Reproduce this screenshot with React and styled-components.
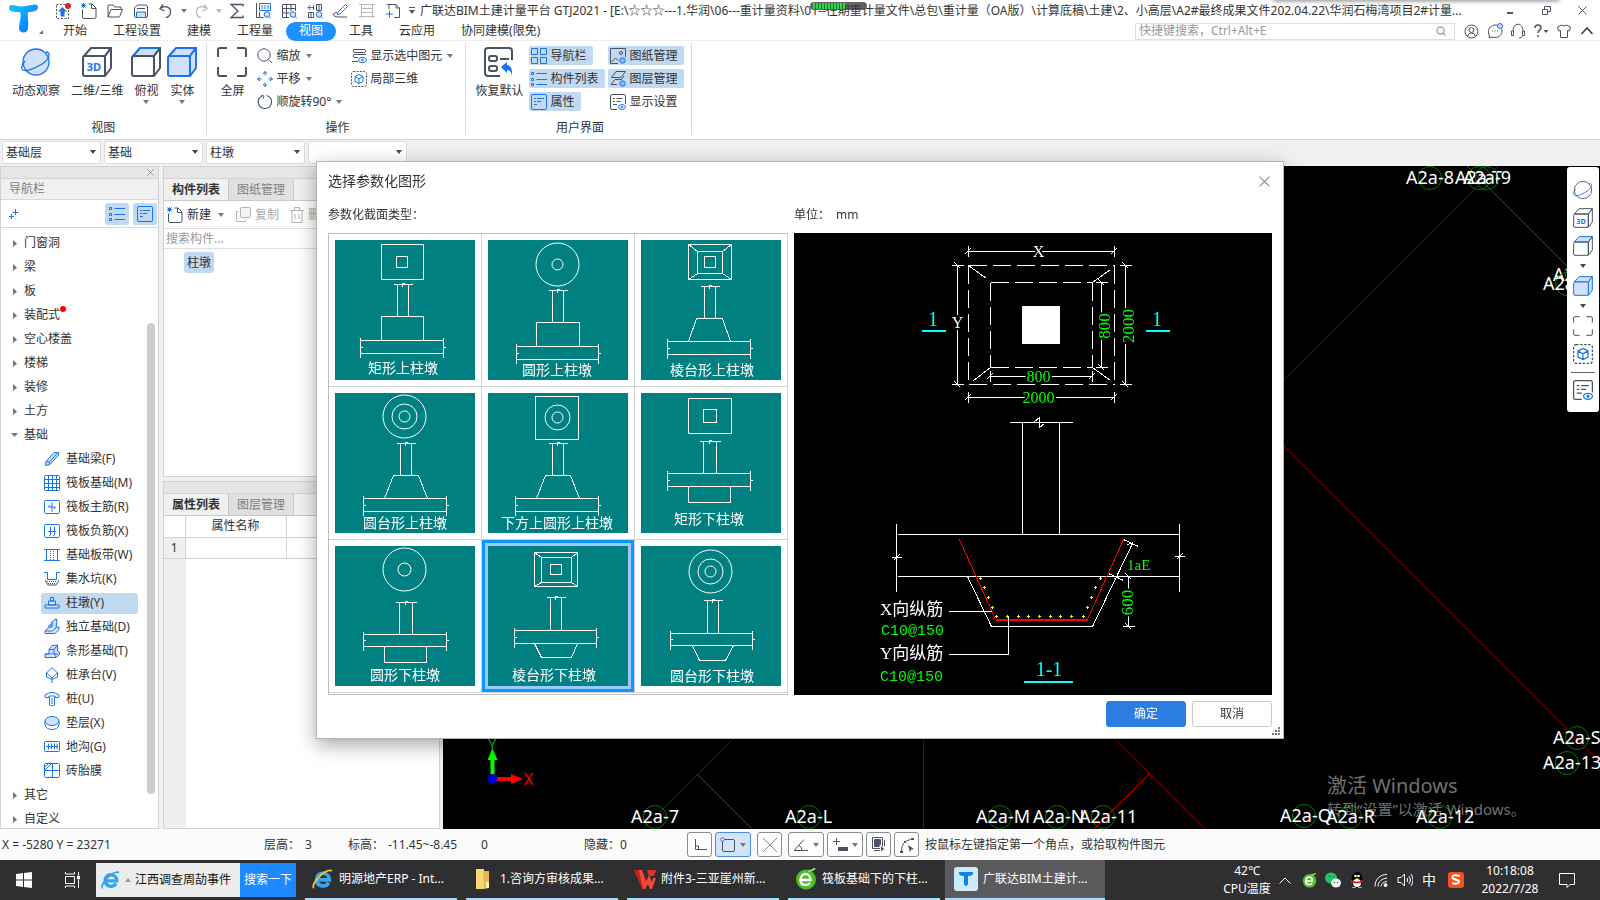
import React, { useState } from 'react';
import styled, { createGlobalStyle, css } from 'styled-components';

const INK = '#4b5263';
const BLUE = '#1a73e8';
const PALE = '#cfe0f8';

// Global Styles
const GlobalStyles = createGlobalStyle`
  * {
    box-sizing: border-box;
  }

  body {
    margin: 0;
    font-family: 'Noto Sans', 'Noto Sans CJK SC', sans-serif;
    font-size: 12px;
    line-height: 16px;
    color: #333333;
    background-color: #f0f0f0;
    overflow: hidden;
  }

  button, input, select {
    font: inherit;
    color: inherit;
  }

  button {
    margin: 0;
    padding: 0;
    border: none;
    background: none;
    white-space: nowrap;
  }

  svg {
    display: block;
    flex: none;
  }
`;

const Page = styled.div`
  display: flex;
  flex-direction: column;
  height: 100vh;
`;

// Header
const Header = styled.header`
  position: relative;
  display: flex;
  height: 41px;
  background-color: #ffffff;
  border-bottom: 1px solid #eeeeee;

  &::after {
    content: '';
    position: absolute;
    top: -2px;
    right: 42px;
    width: 284px;
    height: 2px;
    box-shadow: 0 0 4px 1px rgba(0, 0, 0, 0.5);
  }
`;

const LogoButton = styled.button`
  display: flex;
  align-items: flex-end;
  width: 50px;
  padding: 0 0 6px 8px;
`;

const HeaderRows = styled.div`
  flex: 1;
  min-width: 0;
`;

const TitleRow = styled.div`
  display: flex;
  align-items: center;
  height: 21px;
`;

const QuickButton = styled.button`
  display: flex;
  align-items: center;
  justify-content: center;
  width: ${props => props.$width || 26}px;
  height: 20px;
`;

const WindowTitle = styled.h1`
  flex: 1;
  min-width: 0;
  margin: 0;
  padding-left: 2px;
  overflow: hidden;
  font-size: 12px;
  font-weight: normal;
  white-space: nowrap;
`;

const WindowButton = styled.button`
  display: flex;
  align-items: center;
  justify-content: center;
  width: 36px;
  height: 20px;
`;

const TabRow = styled.nav`
  display: flex;
  align-items: center;
  height: 20px;
`;

const RibbonTab = styled.button`
  height: 19px;
  padding: 0 13px;
  border-radius: 10px;

  ${props => props.$active && css`
    background-color: #1e90ff;
    color: #ffffff;
  `}
`;

const SearchBox = styled.label`
  display: flex;
  align-items: center;
  width: 320px;
  height: 17px;
  margin-left: auto;
  padding: 0 8px 0 3px;
  border: 1px solid #dedede;

  input {
    flex: 1;
    min-width: 0;
    padding: 0;
    border: none;
    outline: none;
    background: none;
  }

  input::placeholder {
    color: #999999;
  }
`;

const HelpIcons = styled.div`
  display: flex;
  align-items: center;
  padding: 0 2px 0 5px;
`;

const HelpButton = styled(QuickButton)`
  width: 23px;
`;

const LoadMeter = styled.div`
  position: absolute;
  left: 810px;
  top: 2px;
  width: 57px;
  height: 8px;
  padding: 1px 3px;
  border-radius: 4px;
  background-color: rgba(60, 60, 60, 0.8);

  &::before {
    content: '';
    display: block;
    width: 32px;
    height: 6px;
    background: repeating-linear-gradient(90deg, #35d24f 0 2px, #1d7a2c 2px 3px);
  }
`;

// Ribbon
const Ribbon = styled.section`
  display: flex;
  height: 99px;
  padding: 2px 0 4px;
  background-color: #ffffff;
  border-bottom: 1px solid #d4d4d4;
`;

const RibbonGroup = styled.div`
  display: flex;
  flex-direction: column;
  padding: ${props => props.$pad};
  border-right: 1px solid #d8d8d8;
`;

const RibbonBody = styled.div`
  display: flex;
  flex: 1;
`;

const RibbonCaption = styled.div`
  height: 15px;
  text-align: center;
`;

const BigButton = styled.button`
  display: flex;
  flex-direction: column;
  align-items: center;
  min-width: 36px;
  padding: 4px ${props => props.$pad || 0}px 0;

  span {
    margin: 6px 0 1px;
  }
`;

const ToolColumn = styled.div`
  display: flex;
  flex-direction: column;
  align-items: flex-start;
  gap: 4px;
  padding-top: 3px;
  margin-left: ${props => props.$left}px;
`;

const ToolButton = styled.button`
  display: flex;
  align-items: center;
  gap: 3px;
  height: 19px;
  padding: 0 7px 0 2px;
  border-radius: 2px;
  background-color: ${props => (props.$on ? '#c2d9f2' : 'transparent')};

  svg:last-child:not(:first-child) {
    margin-left: 2px;
  }
`;

// Filter bar
const FilterBar = styled.div`
  display: flex;
  gap: 3px;
  height: 26px;
  padding: 1px 2px;
`;

const Combo = styled.label`
  position: relative;
  width: 99px;
  height: 23px;

  select {
    width: 100%;
    height: 100%;
    padding: 0 14px 0 3px;
    border: 1px solid #dcdcdc;
    border-radius: 3px;
    background-color: #ffffff;
    appearance: none;
  }

  svg {
    position: absolute;
    right: 5px;
    top: 9px;
    pointer-events: none;
  }
`;

// Work area
const WorkArea = styled.main`
  display: flex;
  flex: 1;
  min-height: 0;
`;

const Panel = styled.section`
  display: flex;
  flex-direction: column;
  min-height: 0;
  flex: ${props => props.$flex || 'none'};
  border: 1px solid #d2d2d2;
  background-color: #ffffff;
`;

const NavPanel = styled(Panel)`
  width: 159px;
`;

const Grip = styled.div`
  display: flex;
  align-items: center;
  justify-content: flex-end;
  flex: none;
  height: 12px;
  padding-right: 4px;
  background-color: #e6e6e6;
  border-bottom: 1px solid #d4d4d4;
`;

const PanelTitle = styled.h2`
  flex: none;
  height: 21px;
  margin: 0;
  padding: 2px 8px;
  font-size: 12px;
  font-weight: normal;
  color: #808080;
  background-color: #f0f0f0;
  border-bottom: 1px solid #d8d8d8;
`;

const NavTools = styled.div`
  display: flex;
  align-items: center;
  flex: none;
  gap: 4px;
  height: 28px;
  padding: 0 1px 0 8px;
  border-bottom: 1px solid #d8d8d8;

  button:first-child {
    margin-right: auto;
  }
`;

const NavToggle = styled.button`
  display: flex;
  align-items: center;
  justify-content: center;
  width: 24px;
  height: 22px;
  border-radius: 3px;
  background-color: #c2d9f2;
`;

const TreeArea = styled.div`
  display: flex;
  flex: 1;
  min-height: 0;
  padding: 3px 3px 0 0;
`;

const Tree = styled.ul`
  flex: 1;
  min-width: 0;
  margin: 0;
  padding: 0;
  overflow: hidden;
  list-style: none;
`;

const TreeRow = styled.li`
  display: flex;
  align-items: center;
  height: 24px;
  padding-left: ${props => (props.$child ? 40 : 10)}px;

  button {
    display: flex;
    align-items: center;
    gap: 6px;
    height: 21px;
    padding-left: ${props => (props.$child ? 3 : 0)}px;
    border-radius: 3px;
  }

  ${props => props.$selected && css`
    button {
      width: 97px;
      background-color: #c2d9f2;
    }
  `}
`;

const NewDot = styled.i`
  width: 6px;
  height: 6px;
  margin: 0 0 12px -6px;
  border-radius: 50%;
  background-color: #ff0000;
`;

const ScrollThumb = styled.div`
  width: 8px;
  margin: 92px 0 34px;
  border-radius: 4px;
  background-color: #cdcdcd;
`;

const MiddleColumn = styled.div`
  display: flex;
  flex-direction: column;
  gap: 4px;
  width: 277px;
  margin: 0 3px 0 4px;
`;

const TabStrip = styled.div`
  display: flex;
  flex: none;
  height: 22px;
  background-color: #f0f0f0;
  border-bottom: 1px solid #c9c9c9;
`;

const PanelTab = styled.button`
  width: 65px;
  border-right: 1px solid #c9c9c9;
  font-weight: ${props => (props.$active ? 'bold' : 'normal')};
  color: ${props => (props.$active ? '#333333' : '#808080')};
  background-color: ${props => (props.$active ? '#f0f0f0' : '#e0e0e0')};
`;

const ListTools = styled.div`
  display: flex;
  align-items: center;
  flex: none;
  gap: 11px;
  height: 28px;
  padding-left: 3px;
  border-bottom: 1px solid #dddddd;

  button {
    display: flex;
    align-items: center;
    gap: 4px;
  }

  button svg:last-child:not(:first-child) {
    margin-left: 3px;
  }

  button:disabled {
    color: #aaaaaa;
  }
`;

const ListSearch = styled.input`
  flex: none;
  height: 20px;
  padding: 0 2px;
  border: none;
  border-bottom: 1px solid #dddddd;
  outline: none;

  &::placeholder {
    color: #999999;
  }
`;

const ListBody = styled.div`
  flex: 1;
  padding: 3px 20px;
`;

const ListItem = styled.button`
  height: 21px;
  padding: 0 3px;
  border-radius: 3px;
  background-color: #c2d9f2;
`;

const PropertyBody = styled.div`
  flex: 1;
  background: linear-gradient(90deg, #efefef 22px, #ffffff 22px);
`;

const PropertyTable = styled.table`
  width: 100%;
  table-layout: fixed;
  border-collapse: collapse;
  background-color: #ffffff;

  th, td {
    height: 21px;
    padding: 0;
    font-weight: normal;
    text-align: center;
    border-right: 1px solid #d2d2d2;
    border-bottom: 1px solid #d2d2d2;
  }

  tbody th {
    background-color: #efefef;
  }
`;

// Drawing canvas
const Canvas = styled.section`
  position: relative;
  flex: 1;
  min-width: 0;
  background-color: #000000;
  overflow: hidden;
`;

const Plan = styled.svg`
  width: 100%;
  height: 100%;
`;

const ViewTools = styled.div`
  position: absolute;
  top: 1px;
  right: 1px;
  display: flex;
  flex-direction: column;
  align-items: center;
  width: 32px;
  padding: 13px 0 12px;
  border-radius: 3px;
  background-color: #ffffff;

  button {
    display: flex;
    flex-direction: column;
    align-items: center;
    padding-bottom: 8px;
    gap: 8px;
  }

  hr {
    width: 24px;
    margin: 0 0 7px;
    border: none;
    border-top: 1px solid #666666;
  }

  button:last-child {
    padding: 0;
  }
`;

const Watermark = styled.div`
  position: absolute;
  right: 74px;
  bottom: 10px;
  width: 199px;
  color: rgba(255, 255, 255, 0.45);
  font-size: 15px;
  line-height: 20px;
  white-space: nowrap;

  strong {
    display: block;
    font-size: 20px;
    font-weight: normal;
    line-height: 26px;
  }
`;

// Dialog
const Overlay = styled.div`
  position: fixed;
  inset: 0;
  display: grid;
  place-items: center;
`;

const Dialog = styled.section`
  position: relative;
  padding: 0 11px 11px;
  border: 1px solid #b5b5b5;
  background-color: #ffffff;
  box-shadow: 0 6px 18px rgba(0, 0, 0, 0.35);
`;

const DialogHead = styled.div`
  display: flex;
  align-items: center;
  justify-content: space-between;
  height: 38px;

  h2 {
    margin: 0;
    font-size: 14px;
    font-weight: normal;
    line-height: 20px;
  }

  button {
    padding: 2px;
  }
`;

const DialogGrid = styled.div`
  display: grid;
  grid-template-columns: 460px 478px;
  column-gap: 6px;
`;

const FieldLabel = styled.div`
  display: flex;
  gap: 6px;
  height: 33px;
  padding-top: 7px;
`;

const Gallery = styled.div`
  display: grid;
  grid-template-columns: repeat(3, 153px);
  align-content: start;
  height: 462px;
  border: 1px solid #bdbdbd;
  border-right: none;
`;

const ShapeCell = styled.button`
  display: grid;
  place-items: center;
  height: 153px;
  border-right: 1px solid #d2d2d2;
  border-bottom: 1px solid #d2d2d2;

  ${props => props.$selected && css`
    box-shadow: inset 0 0 0 3px #0d96ff, inset 0 0 0 6px #9cc8fb;
  `}
`;

const DialogActions = styled.div`
  display: flex;
  justify-content: flex-end;
  gap: 6px;
  padding-top: 6px;
`;

const ActionButton = styled.button`
  width: 80px;
  height: 26px;
  border: 1px solid ${props => (props.$primary ? '#2b7de1' : '#c8c8c8')};
  border-radius: 3px;
  background-color: ${props => (props.$primary ? '#2b7de1' : '#ffffff')};
  color: ${props => (props.$primary ? '#ffffff' : '#333333')};
`;

const ResizeGrip = styled.svg`
  position: absolute;
  right: 3px;
  bottom: 3px;
`;

// Status bar
const StatusBar = styled.footer`
  display: flex;
  align-items: center;
  height: 31px;
  padding-left: 2px;
  background-color: #fbfbfb;
  white-space: nowrap;
`;

const StatusText = styled.span`
  min-width: ${props => props.$width || 0}px;
`;

const StatusButton = styled.button`
  display: flex;
  align-items: center;
  justify-content: center;
  gap: 4px;
  width: ${props => (props.$wide ? 36 : 25)}px;
  height: 25px;
  margin-right: ${props => props.$gap || 3}px;
  border: 1px solid ${props => (props.$on ? '#4a90e2' : '#8c8c8c')};
  border-radius: 3px;
  background-color: ${props => (props.$on ? '#d3e4fa' : '#ffffff')};
`;

// Taskbar
const Taskbar = styled.footer`
  display: flex;
  align-items: center;
  height: 40px;
  background-color: #2f2f31;
  color: #ffffff;
  white-space: nowrap;
`;

const TaskIcon = styled.button`
  display: flex;
  align-items: center;
  justify-content: center;
  width: 48px;
  height: 40px;
`;

const NewsBox = styled.div`
  display: flex;
  align-items: center;
  height: 34px;
  margin-right: 9px;
  color: #111111;
  background-color: #ececec;

  a {
    display: flex;
    align-items: center;
    gap: 4px;
    width: 144px;
    padding-left: 5px;
    color: inherit;
    text-decoration: none;
  }

  button {
    width: 56px;
    height: 34px;
    color: #ffffff;
    background-color: #1e88ff;
  }
`;

const TaskButton = styled.button`
  display: flex;
  align-items: center;
  gap: 5px;
  width: ${props => (props.$active ? 160 : 152)}px;
  height: 40px;
  margin-right: ${props => props.$gap || 9}px;
  padding-left: ${props => (props.$active ? 9 : 7)}px;
  border-bottom: 2px solid #a5dff9;
  background-color: ${props => (props.$active ? '#5b5b5d' : 'transparent')};
`;

const Tray = styled.div`
  display: flex;
  align-items: center;
  margin-left: auto;
  height: 40px;
  padding-right: 15px;
`;

const TrayItem = styled.button`
  display: flex;
  align-items: center;
  justify-content: center;
  width: ${props => props.$width || 24}px;
  height: 40px;
  font-size: ${props => props.$size || 12}px;
  line-height: 18px;
  text-align: center;
`;

// Icons
const Icon = ({ w = 16, h, box, children, ...rest }) => (
  <svg
    width={w}
    height={h || w}
    viewBox={box || `0 0 ${w} ${h || w}`}
    fill="none"
    stroke={INK}
    strokeWidth="1"
    aria-hidden="true"
    {...rest}
  >
    {children}
  </svg>
);

const Caret = ({ color = '#777777' }) => (
  <Icon w={6} h={4} stroke="none"><path d="M0 0h6L3 4z" fill={color} /></Icon>
);

const Cross = ({ size = 8, color = '#777777' }) => (
  <Icon w={size} box="0 0 10 10" stroke={color}><path d="M.5.5l9 9M9.5.5l-9 9" /></Icon>
);

const LogoMark = ({ size = 31 }) => (
  <Icon w={size} box="0 0 31 31" stroke="none">
    <defs>
      <linearGradient id="logo" x1="0" y1="0" x2="1" y2="1">
        <stop offset="0" stopColor="#16c6ff" />
        <stop offset="1" stopColor="#0a6cf5" />
      </linearGradient>
    </defs>
    <path d="M1 5c0-4 4-3 8-2 5 1 9 0 14-1 4-1 7-1 7 2 0 4-4 5-10 5-1 5 1 10 0 16 0 6-9 6-9 0 0-6 3-11 1-16C6 9 1 9 1 5z" fill="url(#logo)" />
  </Icon>
);

const Planet = ({ size = 30, fill = PALE }) => (
  <Icon w={size} box="0 0 30 30" stroke={BLUE} strokeWidth="1.3">
    <circle cx="15" cy="15" r="13" fill={fill} stroke={fill === 'none' ? INK : BLUE} />
    <path d="M25 5c5 0 4 7-4 12S3 26 1 22c-1-3 1-6 3-8" />
  </Icon>
);

const Cube = ({ size = 30, front = 'none', top = 'none', side = 'none', color = INK, label, thin }) => (
  <Icon w={size} box="0 0 30 30" stroke={color} strokeWidth={thin ? 1.5 : 2} strokeLinejoin="round">
    <path d="M2 9l7-8h20l-6 8z" fill={top} stroke={top === 'none' ? color : BLUE} />
    <path d="M23 9l6-8v20l-6 8z" fill={side} />
    <rect x="1" y="9" width="22" height="20" rx="2" fill={front} />
    {label && (
      <text x="12" y="24" textAnchor="middle" fontSize="11" fontWeight="bold" fill={BLUE} stroke="none">{label}</text>
    )}
  </Icon>
);

const Corners = ({ size = 30, thin }) => (
  <Icon w={size} box="0 0 30 30" strokeWidth={thin ? 1.5 : 2}>
    <path d="M1 10V3q0-2 2-2h7M20 1h7q2 0 2 2v7M29 20v7q0 2-2 2h-7M10 29H3q-2 0-2-2v-7" />
  </Icon>
);

const LocalCube = ({ size = 16 }) => (
  <Icon w={size} box="0 0 16 16">
    <rect x=".5" y=".5" width="15" height="15" rx="2" strokeDasharray="2 1.2" />
    <path d="M8 3.5l4 2v5l-4 2-4-2v-5zM4 5.5l4 2.3 4-2.3M8 7.8v4.7" stroke={BLUE} />
  </Icon>
);

const NoteEye = ({ size = 16 }) => (
  <Icon w={size} box="0 0 16 16">
    <path d="M7 15.500H2Q.5 15.500.5 14V2Q.5.5 2 .5h12q1.500 0 1.500 1.500v8M3 4.500h2M6.500 4.500h6M3 7.500h2M6.500 7.500h4M3 10.500h4" />
    <ellipse cx="12" cy="13" rx="3.500" ry="2.400" stroke={BLUE} />
    <circle cx="12" cy="13" r=".8" stroke={BLUE} />
  </Icon>
);

const ListIcon = ({ size = 16 }) => (
  <Icon w={size} box="0 0 16 16" stroke={BLUE}>
    <path d="M5.500 2.500H16M5.500 8.500H16M5.500 13.500H16" />
    <path d="M.5 1.500h2v2h-2zM.5 7.500h2v2h-2zM.5 12.500h2v2h-2z" />
  </Icon>
);

const CardIcon = ({ size = 16 }) => (
  <Icon w={size} box="0 0 16 16" stroke={BLUE}>
    <rect x=".5" y=".5" width="15" height="15" rx="1.500" />
    <path d="M3 4.500h2M6 4.500h7M3 7.500h2M6 7.500h4M3 10.500h3" />
  </Icon>
);

const NewDoc = () => (
  <Icon>
    <path d="M1.500 6.500V14q0 1.500 1.500 1.500h10.500Q15 15.500 15 14V5l-4-4H7.500M10.500 1v4.500H15" />
    <path d="M.5.5l4 4M4.500.5l-4 4M2.500 0v5M0 2.500h5" stroke={BLUE} />
  </Icon>
);

const Lens = () => (
  <g stroke={BLUE}><circle cx="12" cy="11.500" r="2.800" fill={PALE} /><path d="M14 13.500l2 2" /></g>
);

const quickIcons = {
  upload: <Icon><path d="M1.500 1.500h12v14h-12z" strokeDasharray="2 1.500" /><path d="M7.500 4l4.500 4.500H9.500v5h-4v-5H3z" fill={BLUE} stroke="none" /><circle cx="13" cy="3" r="3" fill="#e02020" stroke="none" /></Icon>,
  fresh: <NewDoc />,
  open: <Icon><path d="M1 14V3q0-1 1-1h4l1.500 2H14v2M1 14L4 6.500h11.500L12.500 14z" /></Icon>,
  save: <Icon><path d="M1.500 13V5l3-3h8q2 0 2 2v9q0 1.500-1.500 1.500H3q-1.500 0-1.500-1.500zM4 5.500h8" /><path d="M3.500 9h9v5.500h-9z" fill={PALE} stroke={BLUE} /></Icon>,
  undo: <Icon strokeWidth="1.300"><path d="M5 1.500L2 5.500l4.500 2.500M2 5.500C7 2 13 4 12.500 9c0 3-2 5-4.500 5.500" /></Icon>,
  redo: <Icon strokeWidth="1.300" stroke="#b9b9b9"><path d="M11 1.500l3 4-4.500 2.500M14 5.500C9 2 3 4 3.500 9c0 3 2 5 4.500 5.500" /></Icon>,
  sum: <Icon strokeWidth="1.300"><path d="M14 3.500v-2H2L9 8l-7 6.500h12v-2" /></Icon>,
  sheet: <Icon><path d="M1.500 0v14.500h3V12M1.500 14.500h7M4.500 9v3" /><path d="M4.500.5h11v7h-11z" stroke={BLUE} /><path d="M6 3h8M6 5h8" stroke={BLUE} strokeDasharray="2 1" /><Lens /></Icon>,
  grid: <Icon><path d="M8 14.500H1.500v-13h13V8M1.500 5.500h13M1.500 10h7M5.500 1.500v13M10 1.500V8" /><Lens /></Icon>,
  blocks: <Icon><path d="M9.500 1.500h5v6h-5zM12 1.500v6M1.500 9.500h5v5h-5zM4 9.500v5" /><path d="M7 4.500H1M3.500 2L1 4.500 3.500 7M6.500 2v5" stroke={BLUE} /><Lens /></Icon>,
  pen: <Icon><path d="M5 9l7.500-7.500 2 2L7 11l-3 .5z" stroke={BLUE} /><path d="M4 9q-4 1-3.500 3 .500 2 4.500 2h9" /></Icon>,
  ladder: <Icon stroke="#b9b9b9"><path d="M2.500 1v14M13.500 1v14M0 1.500h16M2.500 5.500h11M2.500 9.500h11M0 13.500h16" /></Icon>,
  crop: <Icon><path d="M4 1.500h7l3.500 3.500v9.500H9M4 1.500V6M1.500 1.500H4M11 1.500V5h3.500" /><path d="M1 11h7M4.500 7.500v7" stroke={BLUE} /></Icon>
};

const treeIcons = {
  beam: <Icon stroke={BLUE}><path d="M1.500 14.500l.5-4 8-9h4.500V4l-8.500 9.500zM2 10.500l3.500.5v3M5.500 11L13.500 2" fill={PALE} /></Icon>,
  raft: <Icon stroke={BLUE}><rect x=".5" y=".5" width="15" height="15" rx="1" /><path d="M0 4.500h16M0 8.500h16M0 12.500h16M4.500 0v16M8.500 0v16M12.500 0v16" /></Icon>,
  main: <Icon stroke={BLUE}><rect x=".5" y="1.500" width="15" height="13" rx="1" /><path d="M8 3.500v9M4.500 8h7M4.500 8l1.500-2M11.500 8L10 10" /></Icon>,
  neg: <Icon stroke={BLUE}><rect x=".5" y="1.500" width="15" height="13" rx="1" /><path d="M6.500 4v8l-1.500 1M10.500 4v8L9 13M4 8.500h8.500" /></Icon>,
  strip: <Icon stroke={BLUE}><path d="M0 2.500h16M0 13.500h16M2.500 3v10M13.500 3v10" /><path d="M6.500 4v9M9.500 4v9" strokeDasharray="1 1" /></Icon>,
  pit: <Icon stroke={BLUE}><path d="M0 1.500h3.500v7h9v-7H16" /><path d="M1 9l3 5h8l3-5" stroke={INK} /><path d="M3 10.500h10M4 12.500h8" stroke={INK} strokeDasharray="1 1" /></Icon>,
  pier: <Icon stroke={BLUE}><path d="M6.500 2.500h3V6h-3zM4.500 6h7v4h-7zM1 10h14v3H1z" fill={PALE} /></Icon>,
  pad: <Icon stroke={BLUE}><path d="M1 14.500h10l4-4V8h-3M1 14.500V12l4-4V6h3V3l3-2.500h2L12 9l-4 3H1M8 3v5M5 8h3" fill={PALE} /></Icon>,
  bar: <Icon stroke={BLUE}><path d="M1 14.500h11l3.500-3V9l-2-1V2L8 2.500 5 6.500V11H1zM5 6.500h5L13.500 2M10 6.500V11h4M1 11h9l2 3" fill={PALE} /></Icon>,
  cap: <Icon stroke={BLUE}><path d="M8 .5L13.500 6v4L8 12.500 2.500 10V6zM2.500 6L8 11l5.500-5M8 11v5" /></Icon>,
  pile: <Icon stroke={BLUE}><path d="M1 4q7-5 14 0v2l-3 1-1-2H5L4 7 1 6zM5.500 6v8q2.500 2 5 0V6M8 7v6" /></Icon>,
  cushion: <Icon stroke={BLUE}><ellipse cx="8" cy="6" rx="7" ry="4.500" fill={PALE} /><path d="M1 6v4c1 6 13 6 14 0V6" /></Icon>,
  trench: <Icon stroke={BLUE}><rect x=".5" y="2.500" width="15" height="10" rx="1" /><path d="M2 7.500h12M4.500 4.500v6M7.500 4.500v6M10.500 4.500v6M13 4.500v6" /></Icon>,
  brick: <Icon stroke={BLUE}><rect x=".5" y=".5" width="15" height="14" rx="1" /><path d="M8.500.5v14M.5 7.500h15M1 7l6-6M1 4l3-3" /></Icon>
};

const categories = ['门窗洞', '梁', '板', '装配式', '空心楼盖', '楼梯', '装修', '土方', '基础'];

const foundations = [
  { name: '基础梁(F)', icon: 'beam' },
  { name: '筏板基础(M)', icon: 'raft' },
  { name: '筏板主筋(R)', icon: 'main' },
  { name: '筏板负筋(X)', icon: 'neg' },
  { name: '基础板带(W)', icon: 'strip' },
  { name: '集水坑(K)', icon: 'pit' },
  { name: '柱墩(Y)', icon: 'pier' },
  { name: '独立基础(D)', icon: 'pad' },
  { name: '条形基础(T)', icon: 'bar' },
  { name: '桩承台(V)', icon: 'cap' },
  { name: '桩(U)', icon: 'pile' },
  { name: '垫层(X)', icon: 'cushion' },
  { name: '地沟(G)', icon: 'trench' },
  { name: '砖胎膜', icon: 'brick' }
];

// Each shape: plan view, column (x1, x2, top, bottom), slab (x1, x2, top, bottom), pier outline, caption
const shapes = [
  { name: '矩形上柱墩', rects: [[46, 4, 42, 35], [61, 16, 11, 11]], col: [62, 73, 44, 76], slab: [25, 108, 100, 113], pier: 'M46 100V76H88V100', at: [68, 133] },
  { name: '圆形上柱墩', circles: [[69, 24, 21], [69, 24, 5]], col: [64, 75, 50, 82], slab: [28, 110, 106, 119], pier: 'M48 106V82H91V106', at: [69, 135] },
  { name: '棱台形上柱墩', rects: [[47, 4, 43, 35], [56, 11, 25, 22], [63, 16, 11, 11]], extra: 'M47 4l9 7M90 4l-9 7M47 39l9-6M90 39l-9-6', col: [63, 74, 46, 78], slab: [26, 109, 101, 114], pier: 'M47 101L55 78H81L89 101', at: [71, 135] },
  { name: '圆台形上柱墩', circles: [[69, 23, 21], [69, 23, 12], [69, 23, 5]], col: [65, 76, 50, 82], slab: [28, 111, 105, 118], pier: 'M49 105L58 82H83L92 105', at: [70, 135] },
  { name: '下方上圆形上柱墩', rects: [[47, 3, 43, 43]], circles: [[69, 24, 12], [69, 24, 5]], col: [64, 75, 50, 82], slab: [27, 110, 105, 118], pier: 'M48 105L57 82H82L91 105', at: [69, 135] },
  { name: '矩形下柱墩', rects: [[47, 5, 43, 35], [62, 16, 13, 13]], col: [62, 75, 48, 80], slab: [26, 109, 80, 93], pier: 'M47 93V109H89V93', at: [68, 131] },
  { name: '圆形下柱墩', circles: [[69, 23, 21], [69, 23, 6]], col: [64, 77, 56, 88], slab: [28, 111, 88, 100], pier: 'M49 100V116H91V100', at: [70, 134] },
  { name: '棱台形下柱墩', rects: [[46, 6, 43, 34], [53, 11, 30, 25], [62, 18, 11, 10]], extra: 'M46 6l7 5M89 6l-6 5M46 40l7-4M89 40l-6-4', col: [62, 73, 51, 84], slab: [26, 108, 84, 97], pier: 'M46 97L53 111H83L89 97', at: [66, 134] },
  { name: '圆台形下柱墩', circles: [[69, 25, 21], [69, 25, 12], [69, 25, 5]], col: [66, 77, 54, 87], slab: [29, 111, 87, 99], pier: 'M51 99L58 114H84L92 99', at: [71, 135] }
];

const ShapePicture = ({ shape }) => {
  const [c1, c2, ct, cb] = shape.col;
  const [s1, s2, st, sb] = shape.slab;
  const mid = Math.round((st + sb) / 2);
  const cm = Math.round((c1 + c2) / 2) - 1;

  return (
    <svg width="140" height="140" viewBox="0 0 140 140">
      <rect width="140" height="140" fill="#008080" />
      <g transform="translate(.5 .5)" fill="none" stroke="#ffffff" shapeRendering="crispEdges">
        {(shape.rects || []).map(([x, y, w, h]) => <rect key={x} x={x} y={y} width={w} height={h} />)}
        {(shape.circles || []).map(([x, y, r]) => <circle key={r} cx={x} cy={y} r={r + 0.5} shapeRendering="auto" />)}
        {shape.extra && <path d={shape.extra} />}
        <path d={`M${c1 - 4} ${ct}H${c2 + 4}M${cm - 1} ${ct - 1}h3M${cm} ${ct - 2}v4M${c1} ${ct}V${cb}M${c2} ${ct}V${cb}`} />
        <path d={`M${s1} ${st}H${s2}M${s1} ${sb}H${s2}M${s1} ${st - 3}V${sb + 4}M${s2} ${st - 3}V${sb + 4}M${s1 - 1} ${mid}h3M${s2 - 1} ${mid}h3`} />
        <path d={shape.pier} />
      </g>
      <text x={shape.at[0]} y={shape.at[1]} textAnchor="middle" fontSize="14" fill="#ffffff">{shape.name}</text>
    </svg>
  );
};

const rebar = [
  [186, 345], [190, 354], [194, 364], [198, 374], [202, 383], [213, 383], [224, 383], [234, 383], [245, 383],
  [256, 383], [266, 383], [277, 383], [289, 383], [293, 374], [297, 364], [301, 354], [306, 345]
];

const DimText = ({ x, y, color, turned, children }) => (
  <text
    x={x}
    y={y}
    textAnchor="middle"
    fontFamily="'Liberation Serif', serif"
    fontSize={turned ? 17 : 16}
    fill={color}
    stroke="#000000"
    strokeWidth="4"
    paintOrder="stroke"
    transform={turned ? `rotate(-90 ${x} ${y}) translate(5 0)` : undefined}
  >
    {children}
  </text>
);

const HDim = ({ x1, x2, y, label, color = '#00ff00' }) => (
  <>
    <path d={`M${x1} ${y}H${x2}M${x1} ${y - 6}v11M${x2} ${y - 6}v11M${x1 - 4} ${y + 3}l6-6M${x2 - 4} ${y + 3}l6-6`} />
    <DimText x={(x1 + x2) / 2 - 3} y={y + 5} color={color}>{label}</DimText>
  </>
);

const VDim = ({ y1, y2, x, label, tx = x, color = '#00ff00', upright }) => {
  const cy = (y1 + y2) / 2;
  return (
    <>
      <path d={`M${x} ${y1}V${y2}M${x - 6} ${y1}h12M${x - 6} ${y2}h12M${x - 3} ${y1 - 3}l6 6M${x - 3} ${y2 - 3}l6 6`} />
      {upright
        ? <DimText x={tx} y={cy + 3} color={color}>{label}</DimText>
        : <DimText x={tx} y={cy + 6} color={color} turned>{label}</DimText>}
    </>
  );
};

const Preview = () => (
  <svg width="478" height="462" viewBox="0 0 478 462">
    <rect width="478" height="462" fill="#000000" />
    <g transform="translate(.5 .5)" fill="none" stroke="#ffffff" shapeRendering="crispEdges">
      <path d="M174 32H320M174 151H320M196 49H298M196 134H298" strokeDasharray="18 6" />
      <path d="M174 32V151M320 32V151M196 49V134M298 49V134" strokeDasharray="18 6" />
      <path d="M174 32l18 13M316 36l-18 13M196 134l-17 13M298 134l18 13" />
      <rect x="228" y="73" width="37" height="37" fill="#ffffff" />
      <HDim x1={174} x2={320} y={18} label="X" color="#ffffff" />
      <HDim x1={196} x2={298} y={143} label="800" />
      <HDim x1={174} x2={320} y={164} label="2000" />
      <VDim y1={32} y2={151} x={163} label="Y" color="#ffffff" upright />
      <VDim y1={49} y2={134} x={307} tx={315} label="800" />
      <VDim y1={32} y2={151} x={331} tx={339} label="2000" />

      <path d="M215 189H278M240 188l5-4v10l5-4M228 189V301M265 189V301" />
      <path d="M103 301H385M103 343H385M102 290V358M385 290V358M97 324h10M99 327l6-6M380 323h10M382 326l6-6" />
      <path d="M173 343L197 393H298L338 310M329 306l15 7M314 340l15 7M333 311l6-2M320 345l6-2" />
      <VDim y1={343} y2={393} x={334} tx={338} label="600" />
      <path d="M165 306L201 386M293 386L329 306" stroke="#ff0000" />
      <path d="M201 386H293" stroke="#ff0000" strokeWidth="2" />
      <path d="M154 378H197M154 421H214V383" />
      {rebar.map(([x, y]) => <path key={`${x}-${y}`} d={`M${x - 1.5} ${y}h3M${x} ${y - 1.5}v3`} stroke="#ffff00" />)}
      <path d="M127 97h24M351 97h24M229 448h49" stroke="#00ffff" strokeWidth="2" />
    </g>
    <g fontFamily="'Liberation Serif', 'Noto Sans CJK SC', serif" fontSize="15" fill="#00ff00">
      <text x="333" y="337">1aE</text>
      <text x="87" y="402" fontFamily="'Liberation Mono', monospace">C10@150</text>
      <text x="86" y="448" fontFamily="'Liberation Mono', monospace">C10@150</text>
      <g fill="#ffffff" fontSize="17">
        <text x="86" y="382">X向纵筋</text>
        <text x="86" y="426">Y向纵筋</text>
      </g>
      <g fill="#00ffff" fontSize="20" textAnchor="middle">
        <text x="139" y="93">1</text>
        <text x="363" y="93">1</text>
        <text x="255" y="443">1-1</text>
      </g>
    </g>
  </svg>
);

const axisLabels = [
  ['A2a-8', 1406, 178], ['A2a-T', 1455, 178], ['A2a-9', 1463, 178], ['A2a-7', 631, 817], ['A2a-L', 785, 817],
  ['A2a-M', 976, 817], ['A2a-N', 1033, 817], ['A2a-11', 1079, 817], ['A2a-Q', 1280, 816], ['A2a-R', 1326, 817],
  ['A2a-12', 1416, 817], ['A2a-S', 1553, 738], ['A2a-13', 1543, 763], ['A2a-10', 1553, 275], ['A2a-U', 1543, 284]
];

const PlanDrawing = () => (
  <Plan viewBox="443 166 1157 663" preserveAspectRatio="xMinYMin slice">
    <g stroke="#8b0000" fill="none">
      <path d="M1498 166L1240 424M1240 402L1600 762M923.500 700V829M1076 700L1205 829M772 700L643 829" />
      <path d="M1467 166L1600 299M1149 774L1094 829M697 774L752 829" stroke="#e00000" />
    </g>
    <g fontSize="18">
      {axisLabels.map(([name, x, y]) => (
        <g key={name}>
          <circle cx={x + 24} cy={y} r="11.500" fill="none" stroke="#007a00" />
          <text x={x} y={y + 6} fill="#ffffff">{name}</text>
        </g>
      ))}
    </g>
    <path d="M490.500 778V760h-3l5-12 5 12h-3V778z" fill="#00ff00" />
    <path d="M497 777h14v-3l12 5-12 5v-3H497z" fill="#ff0000" />
    <circle cx="492.500" cy="779" r="5" fill="#0000c8" />
    <text x="488" y="749" fontSize="15" fill="#00c800">Y</text>
    <text x="524" y="785" fontSize="16" fill="#ff0000">X</text>
  </Plan>
);

const ShapeDialog = () => {
  const [selected, setSelected] = useState('棱台形下柱墩');

  return (
    <Overlay>
      <Dialog role="dialog" aria-labelledby="shape-title">
        <DialogHead>
          <h2 id="shape-title">选择参数化图形</h2>
          <button aria-label="关闭"><Cross size={11} color="#888888" /></button>
        </DialogHead>
        <DialogGrid>
          <FieldLabel>参数化截面类型：</FieldLabel>
          <FieldLabel><span>单位：</span><span>mm</span></FieldLabel>
          <Gallery>
            {shapes.map(shape => (
              <ShapeCell key={shape.name} $selected={shape.name === selected} onClick={() => setSelected(shape.name)}>
                <ShapePicture shape={shape} />
              </ShapeCell>
            ))}
          </Gallery>
          <Preview />
        </DialogGrid>
        <DialogActions>
          <ActionButton $primary>确定</ActionButton>
          <ActionButton>取消</ActionButton>
        </DialogActions>
        <ResizeGrip width="8" height="8" fill="#777777">
          <path d="M6 0h2v2H6zM3 3h2v2H3zM6 3h2v2H6zM0 6h2v2H0zM3 6h2v2H3zM6 6h2v2H6z" />
        </ResizeGrip>
      </Dialog>
    </Overlay>
  );
};

const AppHeader = () => (
  <Header>
    <LogoButton aria-label="菜单">
      <LogoMark />
      <Icon w={4} stroke="none"><path d="M4 0v4H0z" fill="#666666" /></Icon>
    </LogoButton>
    <HeaderRows>
      <TitleRow>
        {['upload', 'fresh', 'open', 'save'].map(name => (
          <QuickButton key={name} aria-label={name}>{quickIcons[name]}</QuickButton>
        ))}
        <QuickButton $width={24} aria-label="undo">{quickIcons.undo}</QuickButton>
        <QuickButton $width={11} aria-label="undo list"><Caret /></QuickButton>
        <QuickButton $width={24} aria-label="redo">{quickIcons.redo}</QuickButton>
        <QuickButton $width={11} aria-label="redo list"><Caret color="#b9b9b9" /></QuickButton>
        {['sum', 'sheet', 'grid', 'blocks', 'pen', 'ladder', 'crop'].map(name => (
          <QuickButton key={name} aria-label={name}>{quickIcons[name]}</QuickButton>
        ))}
        <QuickButton $width={12} aria-label="more">
          <Icon w={6} h={7} stroke="#555555"><path d="M0 .5h6" /><path d="M0 3h6L3 7z" fill="#555555" stroke="none" /></Icon>
        </QuickButton>
        <WindowTitle>广联达BIM土建计量平台 GTJ2021 - [E:\☆☆☆---1.华润\06---重计量资料\01--往期重计量文件\总包\重计量（OA版）\计算底稿\土建\2、小高层\A2#最终成果文件202.04.22\华润石梅湾项目2#计量...</WindowTitle>
        <WindowButton aria-label="最小化"><Icon w={8} h={8}><path d="M1 6h6" strokeWidth="2" /></Icon></WindowButton>
        <WindowButton aria-label="还原"><Icon w={9} h={9}><path d="M.5 3.500h5v5h-5zM2.500 3V.5h6v5H6" /></Icon></WindowButton>
        <WindowButton aria-label="关闭"><Cross size={9} color="#444444" /></WindowButton>
      </TitleRow>
      <TabRow>
        {['开始', '工程设置', '建模', '工程量', '视图', '工具', '云应用', '协同建模(限免)'].map(name => (
          <RibbonTab key={name} $active={name === '视图'}>{name}</RibbonTab>
        ))}
        <SearchBox>
          <input type="text" aria-label="快捷键搜索" placeholder="快捷键搜索，Ctrl+Alt+E" />
          <Icon w={10} stroke="#aaaaaa" strokeWidth="1.500"><circle cx="4.500" cy="4.500" r="3.500" /><path d="M7 7l2.500 2.500" /></Icon>
        </SearchBox>
        <HelpIcons>
          <HelpButton aria-label="用户"><Icon w={15}><circle cx="7.500" cy="7.500" r="6.500" /><circle cx="7.500" cy="6" r="2.500" /><path d="M3.500 12q1-3 4-3t4 3" /></Icon></HelpButton>
          <HelpButton aria-label="消息"><Icon><path d="M2.500 13l-.5 2 3-1c6 2 10-2 10-6S11 2 8 2 1 5 1.500 9q0 2 1 4zM5 8h1M7.500 8h1M10 8h1" /><circle cx="13" cy="3" r="2.500" stroke={BLUE} fill={PALE} /></Icon></HelpButton>
          <HelpButton aria-label="客服"><Icon><path d="M3 8c0-9 10-9 10 0M1.500 8h2v4.500h-2zM12.500 8h2v4.500h-2zM13 12.500q-1 2.500-4 2.500" /></Icon></HelpButton>
          <HelpButton aria-label="帮助"><Icon strokeWidth="1.500"><path d="M2 5c0-4 6-4 6 0 0 2-3 2-3 5M5 12v2" /><path d="M10.500 7h5L13 10z" fill={INK} stroke="none" /></Icon></HelpButton>
          <HelpButton aria-label="皮肤"><Icon><path d="M5.500 2q2.500 2 5 0l4 2-1 4-2-.5v7h-7v-7l-2 .5-1-4z" /></Icon></HelpButton>
          <HelpButton aria-label="收起"><Icon w={12} h={8} strokeWidth="1.500" stroke="#333333"><path d="M.5 7L6 1l5.500 6" /></Icon></HelpButton>
        </HelpIcons>
      </TabRow>
    </HeaderRows>
    <LoadMeter />
  </Header>
);

const AppRibbon = () => (
  <Ribbon>
    <RibbonGroup $pad="0 6px 0 6px">
      <RibbonBody>
        <BigButton $pad={6}><Planet /><span>动态观察</span></BigButton>
        <BigButton $pad={5}><Cube label="3D" /><span>二维/三维</span></BigButton>
        <BigButton><Cube top={PALE} /><span>俯视</span><Caret /></BigButton>
        <BigButton><Cube front={PALE} top={PALE} side={PALE} color={BLUE} /><span>实体</span><Caret /></BigButton>
      </RibbonBody>
      <RibbonCaption>视图</RibbonCaption>
    </RibbonGroup>
    <RibbonGroup $pad="0 5px 0 7px">
      <RibbonBody>
        <BigButton><Corners /><span>全屏</span></BigButton>
        <ToolColumn $left={5}>
          <ToolButton>
            <Icon><circle cx="7" cy="7" r="6.200" /><path d="M11.500 11.500L15 15" /></Icon>缩放 <Caret />
          </ToolButton>
          <ToolButton>
            <Icon stroke={BLUE}><path d="M8 .5v4M8 11.500v4M.5 8h4M11.500 8h4M6 3l2-2.500L10 3M6 13l2 2.500 2-2.500M3 6L.5 8 3 10M13 6l2.500 2-2.500 2" /></Icon>平移 <Caret />
          </ToolButton>
          <ToolButton>
            <Icon><path d="M9.500 1.500c8 2 6 13-2 13-8-1-8-11-2-12.500" strokeWidth="1.200" /><path d="M4 1l3 1-1 3" stroke={BLUE} /></Icon>顺旋转90° <Caret />
          </ToolButton>
        </ToolColumn>
        <ToolColumn $left={0}>
          <ToolButton>
            <Icon><path d="M3 1.500h11q2 1.500 0 3H3q-2-1.500 0-3zM3 6.500h12M7 9.500H3q-2-1.500 0-3M1 13.500h6" /><ellipse cx="11.500" cy="12" rx="4" ry="2.700" stroke={BLUE} /><circle cx="11.500" cy="12" r="1" stroke={BLUE} /></Icon>显示选中图元 <Caret />
          </ToolButton>
          <ToolButton><LocalCube />局部三维</ToolButton>
        </ToolColumn>
      </RibbonBody>
      <RibbonCaption>操作</RibbonCaption>
    </RibbonGroup>
    <RibbonGroup $pad="0 7px 0 9px">
      <RibbonBody>
        <BigButton>
          <Icon w={30} strokeWidth="2"><path d="M16 29H4q-3 0-3-3V4q0-3 3-3h21q3 0 3 3v9M16 12h9" /><rect x="5" y="9" width="8" height="5" rx="2" /><rect x="5" y="19" width="8" height="5" rx="2" /><path d="M17 20l6-5v3q6 1 5 11-1-6-5-6v3z" fill={BLUE} stroke="none" /></Icon>
          <span>恢复默认</span>
        </BigButton>
        <ToolColumn $left={6}>
          <ToolButton $on><Icon stroke={BLUE}><path d="M.5.500h6v6h-6zM9.500.500h6v6h-6zM.5 9.500h6v6h-6zM9.500 9.500h6v6h-6z" /></Icon>导航栏</ToolButton>
          <ToolButton $on><ListIcon />构件列表</ToolButton>
          <ToolButton $on><CardIcon />属性</ToolButton>
        </ToolColumn>
        <ToolColumn $left={3}>
          <ToolButton $on><Icon><path d="M8 15.500H.5V.5h15V9M1.500 14l4-4 3 3" /><circle cx="11" cy="5" r="1.500" /><circle cx="12.500" cy="12.500" r="2.700" stroke={BLUE} fill="#8ab9f0" /></Icon>图纸管理</ToolButton>
          <ToolButton $on><Icon><path d="M6 .5h9.500L11 6.500H1.500zM5 8.500L1 13.500h6M14 5l-2.500 3.500H5" /><circle cx="12.500" cy="12.500" r="2.700" stroke={BLUE} fill="#8ab9f0" /></Icon>图层管理</ToolButton>
          <ToolButton><NoteEye />显示设置</ToolButton>
        </ToolColumn>
      </RibbonBody>
      <RibbonCaption>用户界面</RibbonCaption>
    </RibbonGroup>
  </Ribbon>
);

const NavigationPanel = () => (
  <NavPanel>
    <Grip><Cross size={7} /></Grip>
    <PanelTitle>导航栏</PanelTitle>
    <NavTools>
      <button aria-label="添加"><Icon w={10} stroke={BLUE}><path d="M6.500 0v6M3.500 3.500h6M2.500 5v5M0 7.500h5" /></Icon></button>
      <NavToggle aria-label="列表"><ListIcon /></NavToggle>
      <NavToggle aria-label="卡片"><CardIcon /></NavToggle>
    </NavTools>
    <TreeArea>
      <Tree>
        {categories.map(name => (
          <TreeRow key={name}>
            <button>
              <Icon w={7} stroke="none"><path d={name === '基础' ? 'M0 1h7L3.500 5z' : 'M2 0l4 3.500L2 7z'} fill="#777777" /></Icon>
              {name}
              {name === '装配式' && <NewDot />}
            </button>
          </TreeRow>
        ))}
        {foundations.map(item => (
          <TreeRow key={item.name} $child $selected={item.icon === 'pier'}>
            <button>{treeIcons[item.icon]}{item.name}</button>
          </TreeRow>
        ))}
        {['其它', '自定义'].map(name => (
          <TreeRow key={name}>
            <button><Icon w={7} stroke="none"><path d="M2 0l4 3.500L2 7z" fill="#777777" /></Icon>{name}</button>
          </TreeRow>
        ))}
      </Tree>
      <ScrollThumb />
    </TreeArea>
  </NavPanel>
);

const ComponentPanels = () => (
  <MiddleColumn>
    <Panel $flex="0 0 311px">
      <Grip />
      <TabStrip>
        <PanelTab $active>构件列表</PanelTab>
        <PanelTab>图纸管理</PanelTab>
      </TabStrip>
      <ListTools>
        <button><NewDoc />新建 <Caret /></button>
        <button disabled><Icon stroke="#b5b5b5"><rect x="5.500" y=".5" width="10" height="10" rx="1" fill="#f4f4f4" /><path d="M3.500 4.500H1.500v10h9v-2" /></Icon>复制</button>
        <button disabled><Icon w={14} h={16} stroke="#b5b5b5"><path d="M0 3.500h14M4.500 3V.5h5V3M2 4v11.500h10V4M5 7v5M9 7v5" /></Icon>删除</button>
      </ListTools>
      <ListSearch type="text" aria-label="搜索构件" placeholder="搜索构件..." />
      <ListBody><ListItem>柱墩</ListItem></ListBody>
    </Panel>
    <Panel $flex="1">
      <Grip />
      <TabStrip>
        <PanelTab $active>属性列表</PanelTab>
        <PanelTab>图层管理</PanelTab>
      </TabStrip>
      <PropertyBody>
        <PropertyTable>
          <colgroup><col width="21" /><col width="101" /><col /></colgroup>
          <thead><tr><th /><th>属性名称</th><th>属性值</th></tr></thead>
          <tbody><tr><th>1</th><td /><td /></tr></tbody>
        </PropertyTable>
      </PropertyBody>
    </Panel>
  </MiddleColumn>
);

const AppStatus = () => (
  <StatusBar>
    <StatusText $width={262}>X = -5280 Y = 23271</StatusText>
    <StatusText $width={41}>层高：</StatusText>
    <StatusText $width={43}>3</StatusText>
    <StatusText $width={40}>标高：</StatusText>
    <StatusText $width={93}>-11.45~-8.45</StatusText>
    <StatusText $width={103}>0</StatusText>
    <StatusText $width={103}>隐藏：0</StatusText>
    <StatusButton aria-label="正交"><Icon><path d="M3.500 2v10.500H15M3.500 9h3v3.500" /></Icon></StatusButton>
    <StatusButton $on $wide $gap={6} aria-label="捕捉"><Icon><rect x="2.500" y="2.500" width="12" height="12" rx="1.500" /><circle cx="2.500" cy="2.500" r="1.700" stroke={BLUE} fill="#ffffff" /></Icon><Caret /></StatusButton>
    <StatusButton $gap={6} aria-label="交点"><Icon stroke="#888888"><path d="M1 1l14 14M15 1L1 15" /></Icon></StatusButton>
    <StatusButton $wide aria-label="角度"><Icon><path d="M1 13.500h14M1.500 13L11 2.500M6 8.500q3 1.500 3 5" /></Icon><Caret /></StatusButton>
    <StatusButton $wide aria-label="偏移"><Icon><path d="M1 4.500h7M4.500 1v7" /><path d="M6 10h10v4H6z" fill={INK} stroke="none" /></Icon><Caret /></StatusButton>
    <StatusButton aria-label="复选"><Icon><path d="M1.500.5h10v11h-10z" /><path d="M3.500 2.500h6v7h-6z" fill={INK} /><path d="M3 13.500h6M13.500 3v6" /><path d="M9 8l6 5h-3l-2 3z" fill={INK} stroke="#ffffff" /></Icon></StatusButton>
    <StatusButton $gap={6} aria-label="曲线"><Icon><path d="M2.500 14q0-10 9-11.500" /><path d="M1 14h3v2H1zM5 4h2v2H5zM12 1h3v2h-3zM9 8l6 4-3 .5-1 3z" fill={INK} stroke="none" /></Icon></StatusButton>
    <StatusText>按鼠标左键指定第一个角点，或拾取构件图元</StatusText>
  </StatusBar>
);

const IeMark = ({ size = 24, ring }) => (
  <Icon w={size} box="0 0 24 24" stroke="#35a5f2" strokeWidth="4">
    <path d="M5 13h14c0-9-13-10-14-1-.500 8 10 10 13 4" />
    <path d="M2 22C-2 18 14 0 22 3" stroke={ring || '#35a5f2'} strokeWidth="2" />
  </Icon>
);

const GreenMark = ({ size = 22 }) => (
  <Icon w={size} box="0 0 22 22">
    <circle cx="11" cy="11.500" r="10" fill="#4ebc23" stroke="none" />
    <path d="M5.500 12h10c0-8-10-8-10 0 0 6 7 6 9.500 3" stroke="#ffffff" strokeWidth="2.500" />
    <path d="M13 3q5 0 7-3" stroke="#8be04a" strokeWidth="2" />
  </Icon>
);

const AppTaskbar = () => (
  <Taskbar>
    <TaskIcon aria-label="开始"><Icon stroke="none"><path d="M0 2l7-1v6.500H0zM8 1l8-1v7.500H8zM0 8.500h7V15l-7-1zM8 8.500h8V16l-8-1z" fill="#ffffff" /></Icon></TaskIcon>
    <TaskIcon aria-label="任务视图"><Icon stroke="#ffffff"><path d="M1.500 4.500h9v7h-9zM1.500 0v2h9V0M1.500 16v-2h9v2M14.500 0v3M14.500 8v8" /><path d="M13.500 4h2v3h-2z" fill="#ffffff" /></Icon></TaskIcon>
    <NewsBox>
      <a href="#news"><IeMark size={20} /><Icon w={6} h={4} stroke="none"><path d="M0 4h6L3 0z" fill="#999999" /></Icon>江西调查周劼事件</a>
      <button>搜索一下</button>
    </NewsBox>
    <TaskButton><IeMark size={22} ring="#f5c52b" />明源地产ERP - Int...</TaskButton>
    <TaskButton><Icon w={22} stroke="none"><path d="M3 1h8v20H3z" fill="#f7d775" /><path d="M10 3h6v17l-5 1z" fill="#e8b94a" /><path d="M13 14h3v6h-3z" fill="#fdf0c0" /></Icon>1.咨询方审核成果...</TaskButton>
    <TaskButton>
      <Icon w={22} stroke="none"><path d="M0 2h8l5 12-3 7H8z" fill="#c81e1e" /><path d="M5 2h3l4 12 3-7 3 7 1-4h3l-4 11h-2l-2-5-3 5h-2z" fill="#f4493c" /><path d="M13 2h9l-2 6h-5z" fill="#e3342b" /></Icon>附件3-三亚崖州新...
    </TaskButton>
    <TaskButton $gap={5}><GreenMark />筏板基础下的下柱...</TaskButton>
    <TaskButton $active>
      <Icon w={24} stroke="none"><rect width="24" height="24" rx="3" fill="#cfeafc" /><path d="M5 5h14q1 4-5 4v8q-2 4-4 0V9Q4 9 5 5z" fill="#0b82ee" /></Icon>广联达BIM土建计...
    </TaskButton>
    <Tray>
      <TrayItem as="div" $width={52}>42℃<br />CPU温度</TrayItem>
      <TrayItem aria-label="展开"><Icon w={12} h={7} stroke="#ffffff"><path d="M.5 6.500L6 1l5.500 5.500" /></Icon></TrayItem>
      <TrayItem aria-label="浏览器"><GreenMark size={15} /></TrayItem>
      <TrayItem aria-label="微信"><Icon stroke="none"><ellipse cx="6" cy="6" rx="6" ry="5.500" fill="#1fc467" /><ellipse cx="11" cy="11" rx="5" ry="4.500" fill="#e6f5ea" /><path d="M4 4h1v1H4zM8 4h1v1H8zM9 10h1v1H9zM12 10h1v1h-1z" fill="#333333" /></Icon></TrayItem>
      <TrayItem aria-label="QQ"><Icon stroke="none"><ellipse cx="8" cy="8" rx="5.500" ry="8" fill="#000000" /><ellipse cx="8" cy="11" rx="4" ry="4" fill="#ffffff" /><path d="M2 8q6 3 12 0v2q-6 3-12 0z" fill="#e02020" /><circle cx="6.500" cy="4" r="1.300" fill="#ffffff" /><circle cx="9.500" cy="4" r="1.300" fill="#ffffff" /><path d="M3 15h4v1H3zM9 15h4v1H9zM6 6h4l-2 1z" fill="#f5a800" /></Icon></TrayItem>
      <TrayItem aria-label="网络"><Icon w={14} stroke="#ffffff"><path d="M1 13.500C1 6 6 1.500 13 1.500M4 13.500c0-5 4-8 9-8.500M7 13.500c0-3 3-5 6-5" /><circle cx="11.500" cy="12" r="1.500" fill="#ffffff" /></Icon></TrayItem>
      <TrayItem aria-label="音量"><Icon stroke="#ffffff"><path d="M1 5.500h3L7.500 2v12L4 10.500H1zM10 6q1.500 2 0 4M12 4q3 4 0 8M14 2q4 6 0 12" /></Icon></TrayItem>
      <TrayItem $size={14}>中</TrayItem>
      <TrayItem $width={30} aria-label="输入法"><Icon stroke="none"><rect width="16" height="16" rx="3" fill="#f4511e" /><path d="M12 4Q4 2 4.500 5.500c.5 3 7 1.500 6.500 4.500-.5 2-4 2-7 1" fill="none" stroke="#ffffff" strokeWidth="2" /></Icon></TrayItem>
      <TrayItem as="time" $width={78}>10:18:08<br />2022/7/28</TrayItem>
      <TrayItem $width={36} aria-label="通知"><Icon stroke="#ffffff"><path d="M.5 1.500h15v11H11l-3 3v-3H.5z" /></Icon></TrayItem>
    </Tray>
  </Taskbar>
);

const App = () => (
  <Page>
    <GlobalStyles />
    <AppHeader />
    <AppRibbon />
    <FilterBar>
      {['基础层', '基础', '柱墩', ''].map((value, index) => (
        <Combo key={index}>
          <select aria-label={`筛选${index + 1}`} defaultValue={value}><option>{value}</option></select>
          <Caret color="#444444" />
        </Combo>
      ))}
    </FilterBar>
    <WorkArea>
      <NavigationPanel />
      <ComponentPanels />
      <Canvas>
        <PlanDrawing />
        <Watermark><strong>激活 Windows</strong>转到“设置”以激活 Windows。</Watermark>
        <ViewTools>
          <button aria-label="动态观察"><Planet size={20} fill="none" /></button>
          <button aria-label="三维"><Cube size={20} thin label="3D" /></button>
          <button aria-label="俯视"><Cube size={20} thin top={PALE} /><Caret color="#444444" /></button>
          <button aria-label="实体"><Cube size={20} thin front={PALE} top={PALE} side={PALE} color={BLUE} /><Caret color="#444444" /></button>
          <button aria-label="全屏"><Corners size={20} thin /></button>
          <button aria-label="局部三维"><LocalCube size={20} /></button>
          <hr />
          <button aria-label="显示设置"><NoteEye size={20} /></button>
        </ViewTools>
      </Canvas>
    </WorkArea>
    <AppStatus />
    <AppTaskbar />
    <ShapeDialog />
  </Page>
);

export default App;
